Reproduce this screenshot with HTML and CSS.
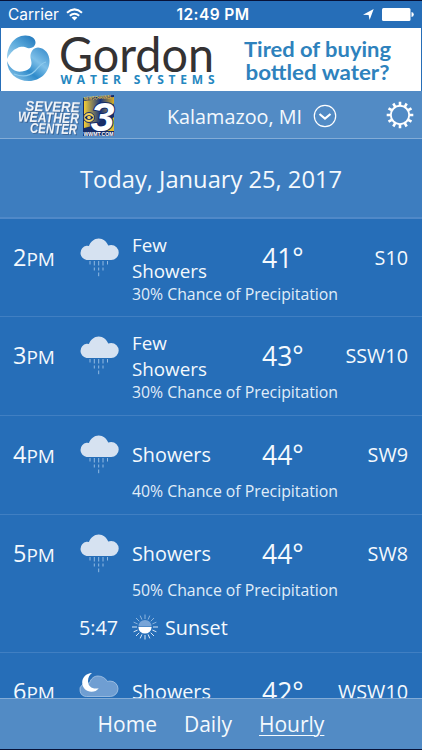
FILE: index.html
```
<!DOCTYPE html>
<html lang="en">
	<head>
		<meta charset="UTF-8">
		<title>Hourly</title>
		<link rel="stylesheet" href="styles.css">
	</head>
	<body>
		<!-- shared weather icons -->
		<svg class="sprite" width="0" height="0">
			<symbol id="rain" viewBox="0 0 40 40">
				<path d="M7.500 22a7.200 7.200 0 0 1 0-14.200q1.200-.1 2.400.2C11.500 3.800 15.200 .5 19.700 .5s7.900 3 9.500 7q1.400-.5 3-.5a7.500 7.500 0 0 1 0 15z" fill="#d6e2f1"/>
				<path d="M11 23v3.500M15.300 23v4.500M19.700 23v4.500M24 23v4.500M28.500 23v3.500M15.300 29.500v3M19.700 29.500v3M24 29.500v3M19.700 34.500v3.700" fill="none" stroke="#91b9e2" stroke-width="1"/>
			</symbol>
			<symbol id="night" viewBox="0 0 40 40">
				<path d="M7.500 24.500a6.700 6.700 0 0 1-4-12q3-2 7-1.500c1.500-4.500 4.500-7 8.500-7s7.500 2.200 9.500 5.500q1.300-.4 2.800-.4a7.700 7.700 0 0 1 0 15.400z" fill="#6f9ed2" stroke="#a9c6e6" stroke-width=".8"/>
				<path d="M13 1C7 1.300 3.200 5.500 3.200 10.500c0 5.500 4.300 9.300 9.300 9.300 3 0 5.600-1.300 7.200-3.600-6 1.300-10.700-1.500-10.700-7.200 0-3.500 1.600-6.300 4-8z" fill="#fff"/>
				<path d="M11 26v4M15.300 26v4M19.700 26v4M24 26v4" stroke="#91b9e2"/>
			</symbol>
		</svg>
		<div class="app">
			<div class="status">
				<div class="carrier">
					<span>Carrier</span>
					<svg width="17" height="13" viewBox="0 0 17 13" fill="none" stroke="#fff" stroke-width="2"><path d="M1 4.800Q8.500-2 16 4.800M3.800 7.800q4.700-4 9.400 0"/><path d="M5.600 9.500q2.900-2.200 5.800 0L8.500 12.500z" fill="#fff" stroke="none"/></svg>
				</div>
				<div class="clock">12:49 PM</div>
				<div class="power">
					<svg width="11" height="11" viewBox="0 0 11 11"><path d="M0 5.800L10.700 0 6.600 11 5.600 5.900z" fill="#fff"/></svg>
					<svg width="32" height="13" viewBox="0 0 32 13" fill="#fff"><rect width="28.500" height="13" rx="1.500"/><path d="M29.500 4q2.300.4 2.300 2.500t-2.300 2.500z"/></svg>
				</div>
			</div>
			<div class="banner">
				<svg width="420" height="63" viewBox="1 28 420 63">
					<defs>
						<linearGradient id="crest" x1="0" y1="1" x2="1" y2="0">
							<stop offset="0" stop-color="#a5d5f0"/>
							<stop offset=".5" stop-color="#5aa9db"/>
							<stop offset="1" stop-color="#1d74ba"/>
						</linearGradient>
						<linearGradient id="wave" x1="1" y1="0" x2="0" y2="1">
							<stop offset="0" stop-color="#2f86c8"/>
							<stop offset=".35" stop-color="#7dbfe8"/>
							<stop offset=".6" stop-color="#2f8bcb"/>
							<stop offset="1" stop-color="#a5d5f0"/>
						</linearGradient>
					</defs>
					<path d="M7 59C7 46 14 36 25 35.500c6-.3 10.500 3 10.500 7 0 4-4 6.500-8 5.500-3-1-6-2-10 0-5 2-8 6-10.500 11z" fill="url(#crest)"/>
					<path d="M38 47.500c7 .5 11.500 6.500 11.500 13.500 0 11-9 20-20.500 20C16 81 7.500 73 7 61c3 8 9 11.500 15 10.500 6-.8 9.500-3.500 9.500-8.500 0-3-2-6-.5-10 1.200-3.300 3.500-5.500 7-5.500z" fill="url(#wave)"/>
					<path d="M14 74c8 3 16 2 21-3 4-4 6-8 11-9" fill="none" stroke="#8ecbee" stroke-width="1.200"/>
					<text class="brand" x="59" y="71.500" textLength="155" lengthAdjust="spacingAndGlyphs">Gordon</text>
					<text class="brandSub" x="60.500" y="84" textLength="154">WATER SYSTEMS</text>
					<text class="slogan" x="244" y="57" textLength="147" lengthAdjust="spacingAndGlyphs">Tired of buying</text>
					<text class="slogan" x="245.500" y="79.500" textLength="144" lengthAdjust="spacingAndGlyphs">bottled water?</text>
				</svg>
			</div>
			<div class="nav">
				<svg class="logo" width="100" height="46" viewBox="16 93 100 46">
					<defs>
						<linearGradient id="gold" x1="0" y1="0" x2="1" y2="0">
							<stop offset="0" stop-color="#f4cd35"/>
							<stop offset=".55" stop-color="#17357d"/>
							<stop offset="1" stop-color="#d9ad27"/>
						</linearGradient>
					</defs>
					<g class="severe" transform="matrix(1 .03 0 1 0 -1)">
						<text x="25.500" y="112" textLength="54" lengthAdjust="spacingAndGlyphs">SEVERE</text>
						<text x="18" y="123.500" textLength="61" lengthAdjust="spacingAndGlyphs">WEATHER</text>
						<text x="30" y="134.500" textLength="47" lengthAdjust="spacingAndGlyphs">CENTER</text>
					</g>
					<path d="M83 99l31-3v41H83z" fill="#142b68"/>
					<path d="M84 102l30-4v6l-9 25-4 4H84z" fill="url(#gold)"/>
					<path d="M84 129l12-3 18-16v24H84z" fill="#182e68"/>
					<path d="M102 129l12-11v14h-14z" fill="#e1b833"/>
					<text class="three" x="90.500" y="131.500" textLength="24" lengthAdjust="spacingAndGlyphs">3</text>
					<ellipse cx="89" cy="118.500" rx="5.500" ry="5" fill="#f5d45c" stroke="#142b68"/>
					<path d="M84.500 118.500q4.500-5 9 0-4.500 5-9 0z" fill="#142b68"/>
					<circle cx="89" cy="118.500" r="1.800" fill="#f5d45c"/>
					<text class="tiny" x="84" y="101.500" textLength="28" lengthAdjust="spacingAndGlyphs" transform="rotate(-5 84 101)">NEWSCHANNEL</text>
					<text class="tiny site" x="83.500" y="136.500" textLength="30" lengthAdjust="spacingAndGlyphs">WWMT.COM</text>
				</svg>
				<div class="city">Kalamazoo, MI</div>
				<svg class="drop" width="24" height="24" viewBox="0 0 24 24" fill="none" stroke="#fff"><circle cx="12" cy="12" r="10.700" stroke-width="1.200"/><path d="M6.500 10l5.500 4.500 5.500-4.500" stroke-width="2.200"/></svg>
				<svg class="gear" width="28" height="28" viewBox="-14 -14 28 28" fill="none" stroke="#fff">
					<circle r="9.200" stroke-width="1.900"/>
					<path d="M0-9.500v-3.800M0 9.500v3.800M-9.500 0h-3.800M9.500 0h3.800M4.800-8.200l1.900-3.300M-4.800-8.200l-1.900-3.300M4.800 8.200l1.900 3.300M-4.800 8.200l-1.900 3.300M8.200-4.800l3.300-1.900M-8.200-4.800l-3.300-1.900M8.200 4.800l3.300 1.900M-8.200 4.800l-3.300 1.900" stroke-width="2.600"/>
				</svg>
			</div>
			<div class="today">Today, January 25, 2017</div>
			<div class="list">
				<div class="item">
					<div class="time">2<small>PM</small></div>
					<svg class="icon"><use href="#rain"/></svg>
					<div class="desc two">Few Showers</div>
					<div class="temp">41°</div>
					<div class="wind">S10</div>
					<div class="chance">30% Chance of Precipitation</div>
				</div>
				<div class="item">
					<div class="time">3<small>PM</small></div>
					<svg class="icon"><use href="#rain"/></svg>
					<div class="desc two">Few Showers</div>
					<div class="temp">43°</div>
					<div class="wind">SSW10</div>
					<div class="chance">30% Chance of Precipitation</div>
				</div>
				<div class="item">
					<div class="time">4<small>PM</small></div>
					<svg class="icon"><use href="#rain"/></svg>
					<div class="desc">Showers</div>
					<div class="temp">44°</div>
					<div class="wind">SW9</div>
					<div class="chance">40% Chance of Precipitation</div>
				</div>
				<div class="item sunsetItem">
					<div class="time">5<small>PM</small></div>
					<svg class="icon"><use href="#rain"/></svg>
					<div class="desc">Showers</div>
					<div class="temp">44°</div>
					<div class="wind">SW8</div>
					<div class="chance">50% Chance of Precipitation</div>
					<div class="sunset">
						<span class="sunTime">5:47</span>
						<svg width="26" height="26" viewBox="-13 -13 26 26">
							<path d="M0-8v-4.500M3.100-7.400l1.700-4M-3.100-7.400l-1.700-4M5.700-5.700l3.300-3.300M-5.700-5.700L-9-9M7.400-3.100l4-1.700M-7.400-3.100l-4-1.700" stroke="#8db5de"/>
							<path d="M-8 0h-5M8 0h5M0 8v4.500M3.100 7.400l1.700 4M-3.100 7.400l-1.700 4M5.700 5.700L9 9M-5.700 5.700L-9 9M7.400 3.100l4 1.700M-7.400 3.100l-4 1.700" stroke="#d9e7f5"/>
							<path d="M-6.600-.5a6.600 6.600 0 0 1 13.200 0z" fill="#78a5d8"/>
							<path d="M-6.600 0a6.600 6.600 0 0 0 13.200 0z" fill="#fff"/>
						</svg>
						<span class="sunLabel">Sunset</span>
					</div>
				</div>
				<div class="item">
					<div class="time">6<small>PM</small></div>
					<svg class="icon"><use href="#night"/></svg>
					<div class="desc">Showers</div>
					<div class="temp">42°</div>
					<div class="wind">WSW10</div>
				</div>
			</div>
			<div class="tabs">
				<span>Home</span>
				<span>Daily</span>
				<span class="active">Hourly</span>
			</div>
		</div>
	</body>
</html>
```
FILE: styles.css
```
body {
	margin: 0;
	background-color: #266eb8;
	font-family: "Open Sans", "Noto Sans", sans-serif;
	color: #f4f9fd;
}
.sprite {
	position: absolute;
}
svg {
	display: block;
	flex: none;
}
.app {
	display: flex;
	flex-direction: column;
	box-sizing: border-box;
	height: 750px;
	overflow: hidden;
	border-top: 1px solid #071238;
	border-bottom: 1px solid #071238;
}
.status {
	display: grid;
	grid-template-columns: 1fr auto 1fr;
	align-items: center;
	box-sizing: border-box;
	height: 27px;
	padding: 0 8px;
	font: 15.5px/27px Inter, sans-serif;
	color: #fff;
}
.carrier, .power {
	display: flex;
	align-items: center;
	gap: 7px;
}
.power {
	justify-content: flex-end;
	gap: 8px;
}
.clock {
	padding-left: 4px;
	font-weight: 600;
	letter-spacing: .4px;
}
.banner {
	height: 63px;
	padding: 0 1px;
}
.banner svg {
	background-color: #fff;
}
.brand {
	font: 48px Lato, sans-serif;
	fill: #343233;
}
.brandSub {
	font: bold 12px "Open Sans", sans-serif;
	fill: #2587c0;
}
.slogan {
	font: bold 21px Lato, sans-serif;
	fill: #2e82bd;
}
.nav {
	display: flex;
	align-items: center;
	box-sizing: border-box;
	height: 48px;
	padding-left: 16px;
	background-color: #528bc5;
	border-bottom: 1px solid #83acd7;
}
.severe {
	font: italic bold 14px "Liberation Sans", sans-serif;
	fill: #f5f7fa;
	filter: drop-shadow(1px 1px 0 #3b6596);
}
.three {
	font: italic bold 40px "Liberation Sans", sans-serif;
	fill: #fff;
	stroke: #142b68;
	stroke-width: 2px;
	paint-order: stroke;
}
.tiny {
	font: bold 5px "Liberation Sans", sans-serif;
	fill: #f3d250;
}
.site {
	fill: #fff;
}
.city {
	width: 146px;
	margin-left: 51px;
	padding-top: 3px;
	font-size: 19.8px;
	white-space: nowrap;
}
.drop {
	margin-top: 3px;
}
.gear {
	margin-left: 49px;
	margin-top: 1px;
}
.today {
	box-sizing: border-box;
	height: 80px;
	background-color: #3d7dbf;
	border-bottom: 2px solid #5089c8;
	font-size: 23.7px;
	line-height: 81px;
	text-align: center;
}
.list {
	flex: 1;
	overflow: hidden;
}
.item {
	display: grid;
	grid-template-columns: 66px 53px 130px 46px 1fr;
	grid-template-rows: 52px 20px;
	align-items: center;
	box-sizing: border-box;
	height: 99px;
	padding: 13px 14px 0 13px;
	border-bottom: 1px solid #407fc2;
}
.item:first-child {
	height: 98px;
}
.time {
	font-size: 23.5px;
	line-height: 52px;
}
.time small {
	font-size: 19px;
}
.icon {
	width: 40px;
	height: 40px;
}
.desc, .wind {
	margin-top: -1px;
	font-size: 19.8px;
}
.two {
	width: 90px;
	font-size: 18.8px;
	line-height: 26px;
}
.temp {
	font-size: 26.5px;
	line-height: 52px;
}
.wind {
	text-align: right;
}
.chance {
	grid-column: 3 / 6;
	font-size: 15.8px;
	line-height: 20px;
	color: #e0edf8;
}
.sunsetItem {
	grid-template-rows: 52px 20px 54px;
	height: 138px;
}
.sunset {
	grid-column: 2 / 6;
	display: flex;
	align-items: center;
	font-size: 19.8px;
}
.sunTime {
	width: 53px;
}
.sunLabel {
	margin-left: 7px;
}
.tabs {
	display: flex;
	justify-content: center;
	gap: 27px;
	box-sizing: border-box;
	height: 51px;
	border-top: 1px solid #83acd7;
	background-color: #528bc5;
	font-size: 21px;
	line-height: 50px;
}
.active {
	text-decoration: underline;
	text-decoration-thickness: 1px;
	text-underline-offset: 3px;
}
```
